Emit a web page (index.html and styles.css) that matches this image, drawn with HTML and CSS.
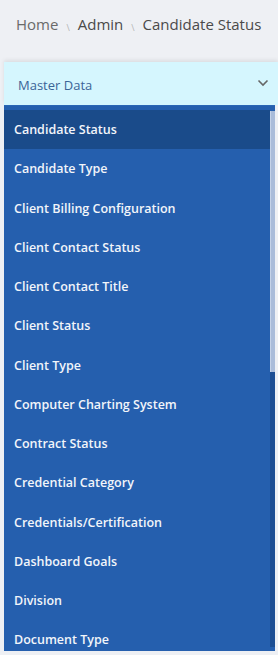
FILE: index.html
```html
<!DOCTYPE html>
<html lang="en">
<head>
    <meta charset="UTF-8">
    <meta name="viewport" content="width=device-width, initial-scale=1.0">
    <title>Candidate Status</title>
    <link rel="stylesheet" href="styles.css">
</head>
<body>

    <div class="breadcrumb">
        <span class="crumb crumb-home">Home</span>
        <span class="sep">\</span>
        <span class="crumb">Admin</span>
        <span class="sep">\</span>
        <span class="crumb">Candidate Status</span>
    </div>

    <div class="menu">
        <div class="menu-head">
            <span>Master Data</span>
            <svg class="chevron" width="12" height="8" viewBox="0 0 12 8">
                <path d="M1.5 1.5 L6 6 L10.5 1.5" fill="none" stroke="#666" stroke-width="1.6"/>
            </svg>
        </div>

        <div class="menu-body">
            <ul class="menu-list">
                <li class="active">Candidate Status</li>
                <li>Candidate Type</li>
                <li>Client Billing Configuration</li>
                <li>Client Contact Status</li>
                <li>Client Contact Title</li>
                <li>Client Status</li>
                <li>Client Type</li>
                <li>Computer Charting System</li>
                <li>Contract Status</li>
                <li>Credential Category</li>
                <li>Credentials/Certification</li>
                <li>Dashboard Goals</li>
                <li>Division</li>
                <li>Document Type</li>
            </ul>
            <div class="scrollbar">
                <div class="thumb"></div>
            </div>
        </div>
    </div>

</body>
</html>
```

FILE: styles.css
```css
body {
    margin: 0;
    background-color: #eef0f4;
    font-family: "Open Sans", Arial, sans-serif;
}

.breadcrumb {
    height: 62px;
    padding-left: 16px;
    padding-bottom: 14px;
    display: flex;
    align-items: center;
    gap: 8px;
    box-sizing: border-box;
    font-size: 15px;
    color: #4a4a4a;
    white-space: nowrap;
}

.crumb-home {
    color: #6a6a6a;
}

.sep {
    font-size: 9px;
    color: #b5b5b5;
    margin-top: 6px;
}

.menu {
    margin-left: 4px;
}

.menu-head {
    height: 43px;
    background-color: #d5f6fe;
    box-shadow: 0px -2px 4px rgba(0, 0, 0, 0.08);
    display: flex;
    align-items: center;
    justify-content: space-between;
    padding: 2px 9px 0 14px;
    box-sizing: border-box;
    font-size: 13px;
    color: #3b6497;
}

.chevron {
    margin-bottom: 4px;
}

.menu-body {
    display: flex;
    width: 271px;
    height: 546px;
    padding: 4px 0 4px 0;
    box-sizing: border-box;
    background-color: #255fae;
    border-top: 1px solid #2a66b5;
}

.menu-list {
    flex: 1;
    list-style: none;
    margin: 0;
    padding: 0;
    overflow: hidden;
}

.menu-list li {
    height: 39.25px;
    line-height: 39.25px;
    padding-left: 10px;
    font-size: 12.5px;
    font-weight: 600;
    color: #f2f5fa;
    white-space: nowrap;
}

.menu-list li.active {
    background-color: #1a4b8a;
}

.scrollbar {
    width: 5px;
    margin-top: 1px;
    background-color: #1d4f94;
}

.thumb {
    height: 261px;
    background-color: #a9bcda;
    border-left: 1px solid #c4d2e8;
    box-sizing: border-box;
}
```
